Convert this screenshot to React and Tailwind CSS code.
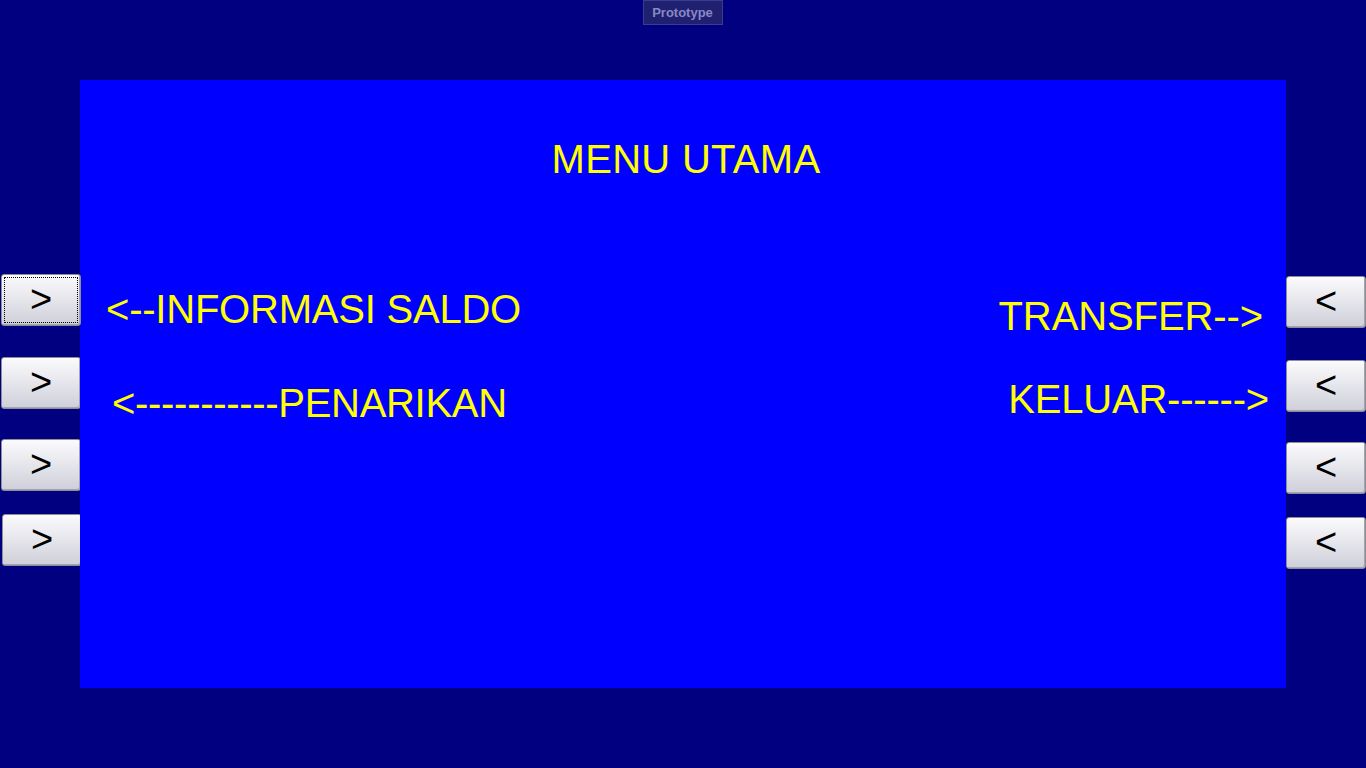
export default function App() {
  const btn =
    "w-[80px] h-[52px] flex items-center justify-center rounded-[3px] border border-[#8e8e96] bg-gradient-to-b from-[#fbfbfd] to-[#cfcfda] shadow-[inset_-1px_-1px_0_#a4a4ac] text-black text-[38px] leading-none";

  return (
    <div className="h-[768px] w-[1366px] bg-[#000080] font-['Liberation_Sans',Arial,sans-serif] overflow-hidden">
      {/* top badge */}
      <div className="h-[80px] flex justify-center">
        <div className="ml-[-1px] h-[25px] w-[80px] flex items-center justify-center bg-[#202070] border border-[#3c3c8e] text-[#8888c4] text-[13px] font-bold">
          Prototype
        </div>
      </div>

      <div className="flex">
        {/* left buttons */}
        <div className="w-[80px] flex flex-col pt-[194px] pl-[1px]">
          <button className={btn + " relative"}>
            <span className="absolute inset-[2px] border border-dotted border-black"></span>
            <span className="mt-[-2px]">&gt;</span>
          </button>
          <button className={btn + " mt-[31px]"}>
            <span className="mt-[-2px]">&gt;</span>
          </button>
          <button className={btn + " mt-[30px]"}>
            <span className="mt-[-2px]">&gt;</span>
          </button>
          <button className={btn + " mt-[23px] ml-[1px]"}>
            <span className="mt-[-2px]">&gt;</span>
          </button>
        </div>

        {/* screen */}
        <div className="w-[1206px] h-[608px] bg-[#0000ff] text-[#ffff00] text-[40px] leading-[40px] pt-[59px]">
          <div className="text-center pl-[6px] tracking-[0.3px]">MENU UTAMA</div>
          <div className="flex justify-between">
            <div className="flex flex-col">
              <div className="mt-[110px] ml-[26px] tracking-[-0.22px]">&lt;--INFORMASI SALDO</div>
              <div className="mt-[54px] ml-[32px] tracking-[-0.3px]">&lt;-----------PENARIKAN</div>
            </div>
            <div className="flex flex-col items-end">
              <div className="mt-[117px] mr-[23px] tracking-[-0.1px]">TRANSFER--&gt;</div>
              <div className="mt-[43px] mr-[17px] tracking-[-0.2px]">KELUAR------&gt;</div>
            </div>
          </div>
        </div>

        {/* right buttons */}
        <div className="w-[80px] flex flex-col pt-[196px]">
          <button className={btn}>
            <span className="mt-[-2px]">&lt;</span>
          </button>
          <button className={btn + " mt-[32px]"}>
            <span className="mt-[-2px]">&lt;</span>
          </button>
          <button className={btn + " mt-[30px]"}>
            <span className="mt-[-2px]">&lt;</span>
          </button>
          <button className={btn + " mt-[23px]"}>
            <span className="mt-[-2px]">&lt;</span>
          </button>
        </div>
      </div>
    </div>
  );
}
